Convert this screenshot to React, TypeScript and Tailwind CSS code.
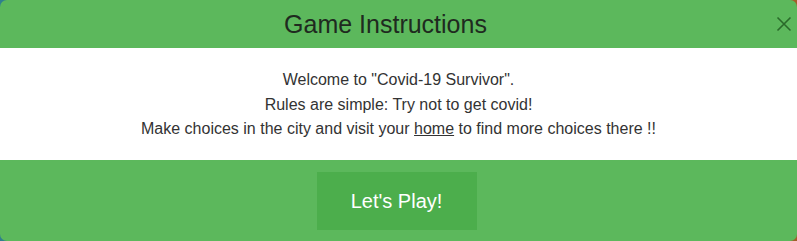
export default function App() {
  return (
    <div className="w-[797px] h-[241px] bg-gradient-to-r from-[#2f7f8f] to-[#a0602a] font-['Liberation_Sans',Arial,sans-serif]">
      <div className="flex h-full flex-col overflow-hidden rounded-[7px] bg-[#5cb85c]">
        {/* header */}
        <div className="relative flex h-[48px] items-center justify-center pr-[26px]">
          <h2 className="text-[25px] leading-none text-[#1f2a1f]">Game Instructions</h2>
          <button className="absolute right-[5px] top-[16px] flex h-[16px] w-[16px] items-center justify-center">
            <svg width="16" height="16" viewBox="0 0 16 16" fill="none" stroke="#2a6a2a" strokeWidth="1.6">
              <path d="M1.5 1.5 L14.5 14.5 M14.5 1.5 L1.5 14.5" />
            </svg>
          </button>
        </div>

        {/* body */}
        <div className="flex h-[112px] flex-col items-center bg-white pt-[20px] text-[16px] leading-[24.5px] text-[#333]">
          <p>Welcome to "Covid-19 Survivor".</p>
          <p>Rules are simple: Try not to get covid!</p>
          <p>
            Make choices in the city and visit your <span className="underline">home</span> to find more choices there !!
          </p>
        </div>

        {/* footer */}
        <div className="flex flex-1 justify-center pt-[12px] pr-[4px]">
          <button className="h-[58px] w-[160px] bg-[#4cae4c] text-[20px] text-white">Let's Play!</button>
        </div>
      </div>
    </div>
  );
}
